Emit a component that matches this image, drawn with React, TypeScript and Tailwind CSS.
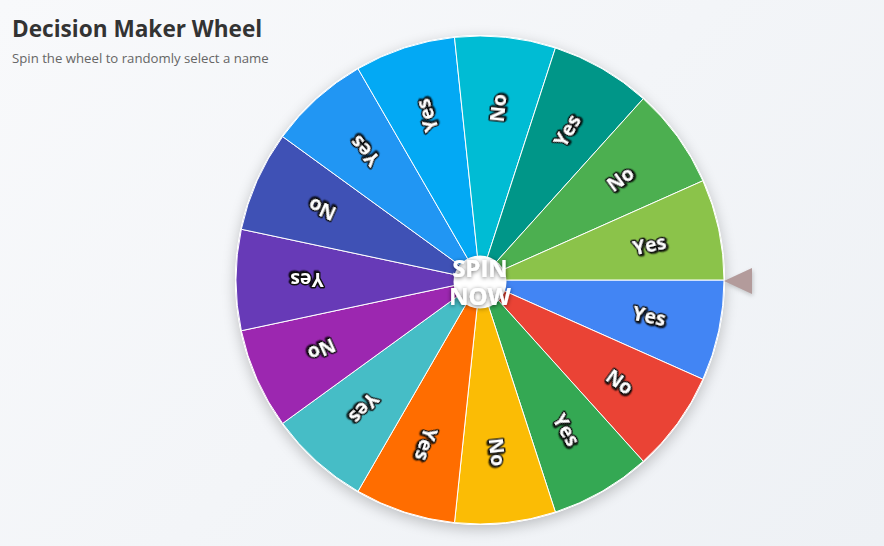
import React from "react";

const SEGS: { label: string; color: string }[] = [
  { label: "Yes", color: "#4285F4" },
  { label: "No", color: "#EA4335" },
  { label: "Yes", color: "#34A853" },
  { label: "No", color: "#FBBC05" },
  { label: "Yes", color: "#FF6D00" },
  { label: "Yes", color: "#46BDC6" },
  { label: "No", color: "#9C27B0" },
  { label: "Yes", color: "#673AB7" },
  { label: "No", color: "#3F51B5" },
  { label: "Yes", color: "#2196F3" },
  { label: "Yes", color: "#03A9F4" },
  { label: "No", color: "#00BCD4" },
  { label: "Yes", color: "#009688" },
  { label: "No", color: "#4CAF50" },
  { label: "Yes", color: "#8BC34A" },
];

const R = 245;
const C = 245;

function pt(angleDeg: number, r: number) {
  const a = (angleDeg * Math.PI) / 180;
  return [C + r * Math.cos(a), C + r * Math.sin(a)];
}

function Wheel() {
  const step = 360 / SEGS.length;
  return (
    <svg width={490} height={490} viewBox="0 0 490 490" className="block">
      <defs>
        <filter id="ts" x="-20%" y="-20%" width="140%" height="140%">
          <feDropShadow dx="1.3" dy="1.3" stdDeviation="0.6" floodColor="#000" floodOpacity="0.75" />
        </filter>
        <filter id="cs" x="-50%" y="-50%" width="200%" height="200%">
          <feGaussianBlur stdDeviation="2" />
        </filter>
        <filter id="ctext" x="-30%" y="-30%" width="160%" height="160%">
          <feDropShadow dx="0" dy="1" stdDeviation="2" floodColor="#000" floodOpacity="0.55" />
        </filter>
      </defs>
      <circle cx={C} cy={C} r={R} fill="#ffffff" />
      {SEGS.map((s, i) => {
        const a0 = i * step;
        const a1 = (i + 1) * step;
        const [x0, y0] = pt(a0, R - 1);
        const [x1, y1] = pt(a1, R - 1);
        return (
          <path
            key={i}
            d={`M ${C} ${C} L ${x0} ${y0} A ${R - 1} ${R - 1} 0 0 1 ${x1} ${y1} Z`}
            fill={s.color}
            stroke="#ffffff"
            strokeWidth={1}
          />
        );
      })}
      {SEGS.map((s, i) => {
        const mid = i * step + step / 2;
        const [x, y] = pt(mid, 173);
        return (
          <text
            key={"t" + i}
            x={x}
            y={y}
            transform={`rotate(${mid} ${x} ${y})`}
            textAnchor="middle"
            dominantBaseline="central"
            fill="#ffffff"
            stroke="#111111"
            strokeWidth={2.8}
            strokeLinejoin="round"
            filter="url(#ts)"
            className="[paint-order:stroke]"
            style={{ fontFamily: "'Open Sans', 'Noto Sans', sans-serif", fontWeight: 700, fontSize: 19.5 }}
          >
            {s.label}
          </text>
        );
      })}
      <circle cx={C} cy={C + 3} r={27} fill="#000000" opacity={0.22} filter="url(#cs)" />
      <circle cx={C} cy={C + 2} r={26.5} fill="#ffffff" />
      <text
        textAnchor="middle"
        fill="#ffffff"
        filter="url(#ctext)"
        style={{ fontFamily: "'Open Sans', 'Noto Sans', sans-serif", fontWeight: 700, fontSize: 24 }}
      >
        <tspan x={C} y={C - 3}>SPIN</tspan>
        <tspan x={C} y={C + 25}>NOW</tspan>
      </text>
    </svg>
  );
}

export default function App() {
  return (
    <div className="grid h-[546px] w-full overflow-hidden bg-[linear-gradient(135deg,#f8f9fb_0%,#eef1f5_100%)] font-['Open_Sans','Noto_Sans',sans-serif]">
      <div className="col-start-1 row-start-1 flex items-start pl-[235px] pt-[35px]">
        <div className="rounded-full shadow-[0_4px_14px_rgba(0,0,0,0.22)]">
          <Wheel />
        </div>
        <div className="ml-[-1px] mt-[232px] drop-shadow-[1px_2px_2px_rgba(0,0,0,0.2)]">
          <svg width={30} height={28} viewBox="0 0 30 28" className="block">
            <polygon points="0,14 28,1 28,27" fill="#B39B9B" />
          </svg>
        </div>
      </div>
      <div className="col-start-1 row-start-1 self-start justify-self-start pl-[12px] pt-[14px]">
        <h1 className="text-[22.6px] font-bold leading-[30px] text-[#333333]">Decision Maker Wheel</h1>
        <p className="mt-[5px] text-[13.2px] leading-[18px] text-[#666666]">Spin the wheel to randomly select a name</p>
      </div>
    </div>
  );
}
